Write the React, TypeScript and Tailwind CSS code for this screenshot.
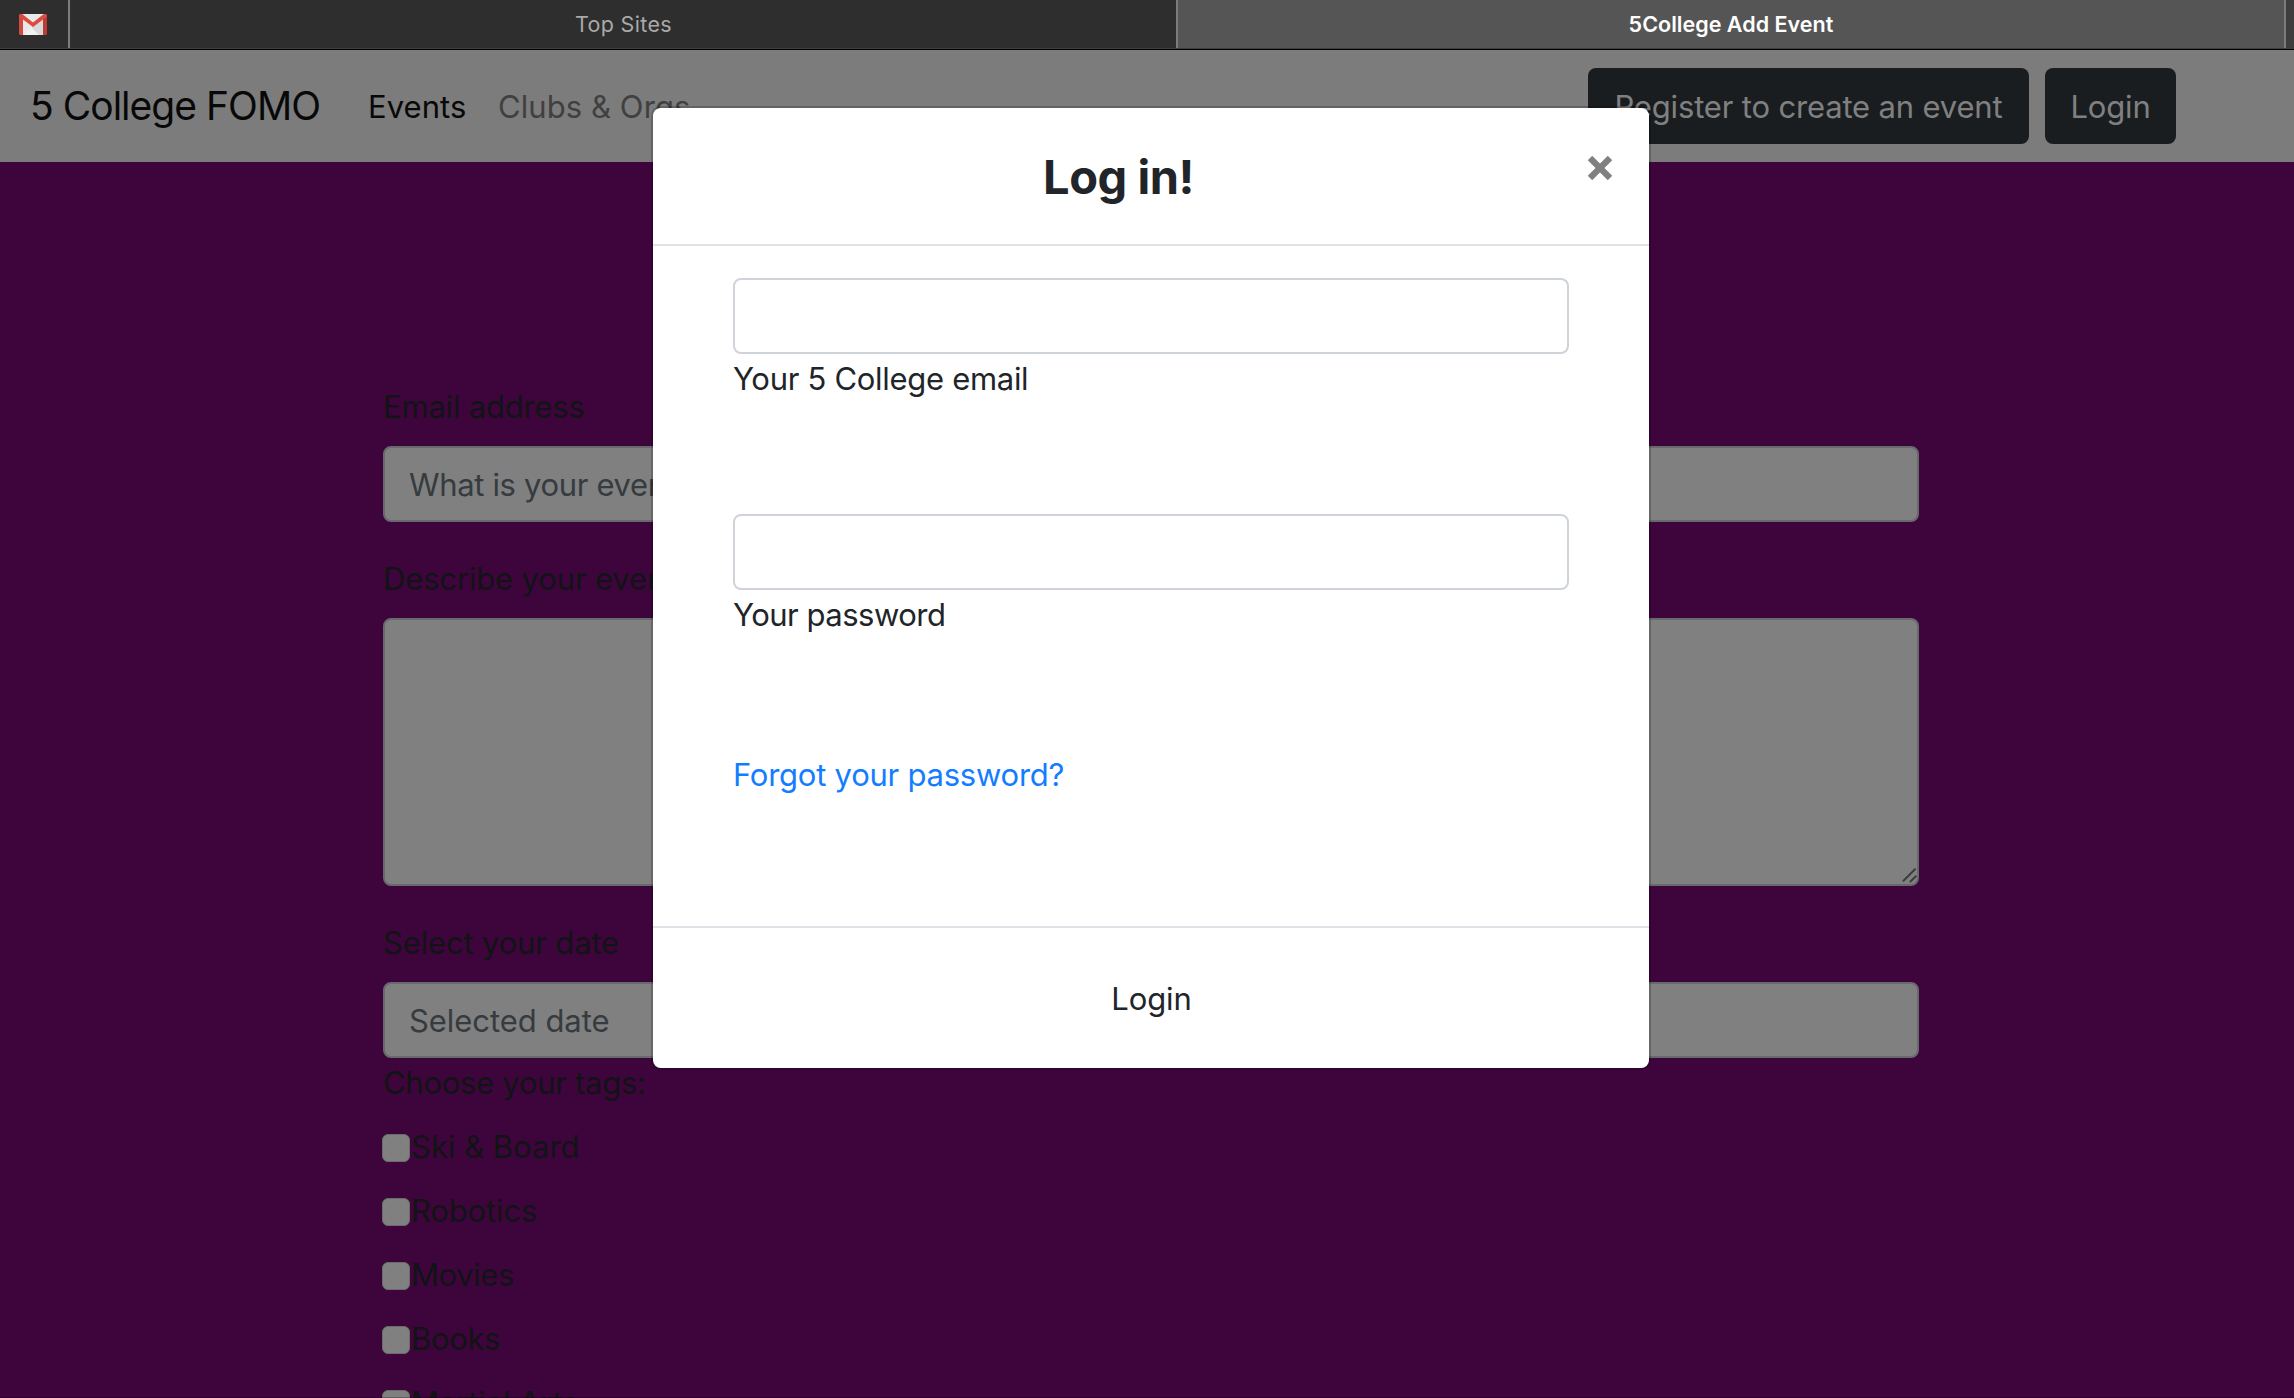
import React from "react";

const TAGS = [
  { name: "Ski & Board", tracking: "tracking-[0px]" },
  { name: "Robotics", tracking: "tracking-[-0.15px]" },
  { name: "Movies", tracking: "tracking-[-0.42px]" },
  { name: "Books", tracking: "tracking-[-0.36px]" },
  { name: "Martial Arts", tracking: "tracking-[-0.1px]" },
];

function GmailIcon() {
  return (
    <svg width="28" height="21" viewBox="0 0 28 21" className="block">
      <rect x="1" y="0" width="26" height="21" rx="1.5" fill="#e9e9e9" />
      <path d="M4 21 L14 11.5 L24 21 Z" fill="#f1f1f1" />
      <path d="M14 12.5 L24 3.5 V21 H20 L12.5 13.5 Z" fill="#d9d9d9" />
      <path d="M0 2 Q0 0 2 0 L4 1.5 V21 H1.5 Q0 21 0 19.5 Z" fill="#d54a40" />
      <path d="M28 2 Q28 0 26 0 L24 1.5 V21 H26.5 Q28 21 28 19.5 Z" fill="#c13a33" />
      <path d="M0 2 Q0 0 2 0 H3.2 L14 8.6 L24.8 0 H26 Q28 0 28 2 V2.6 L14 13 L0 2.6 Z" fill="#dc4b40" />
    </svg>
  );
}

function TabBar() {
  return (
    <div className="flex h-[50px] border-b border-black bg-[#3e3e3e] pb-px text-[21.5px] leading-[48px]">
      <div className="flex w-[70px] items-center border-r-2 border-[#7c7c7c] bg-[#2e2e2e] pl-[19px] pt-px">
        <GmailIcon />
      </div>
      <div className="w-[1108px] border-r-2 border-[#7c7c7c] bg-[#2e2e2e] pl-px text-center tracking-[0.34px] text-[#a9a9a9]">
        Top Sites
      </div>
      <div className="w-[1108px] border-r-2 border-[#7c7c7c] bg-[#555555] text-center font-semibold tracking-[0.03px] text-white">
        5College Add Event
      </div>
    </div>
  );
}

function NavBar() {
  return (
    <nav className="flex h-28 items-center bg-[#7c7c7c] pl-[29px] pr-[118px]">
      <span className="w-[339px] pl-px text-[39px] leading-[60px] tracking-[-0.98px] text-[#080808]">
        5 College FOMO
      </span>
      <span className="w-[130px] pt-0.5 leading-[50px] tracking-[0.06px] text-[#080808]">Events</span>
      <span className="pt-0.5 leading-[50px] tracking-[0.08px] text-[#404040]">Clubs &amp; Orgs</span>
      <div className="ml-auto flex gap-4">
        <button className="h-[76px] w-[441px] rounded-lg bg-[#1a1d20] pt-0.5 leading-[50px] tracking-[-0.165px] text-[#808080]">
          Register to create an event
        </button>
        <button className="h-[76px] w-[131px] rounded-lg bg-[#1a1d20] pt-0.5 leading-[50px] tracking-[-0.16px] text-[#808080]">
          Login
        </button>
      </div>
    </nav>
  );
}

function EventForm() {
  return (
    <main className="px-[383px] pr-[375px] pt-[220px] text-[#111315]">
      <div className="mb-4 h-12 leading-[50px] tracking-[-0.2px]">Email address</div>
      <div className="h-[76px] rounded-lg border-2 border-[#676a6d] bg-[#808080] px-6 py-3 leading-[50px] tracking-[-0.34px] text-[#363b3f]">
        What is your event name?
      </div>
      <div className="mb-4 mt-8 h-12 leading-[50px] tracking-[-0.15px]">Describe your event</div>
      <div className="flex h-[268px] items-end justify-end rounded-lg border-2 border-[#676a6d] bg-[#808080]">
        <svg width="16" height="18" viewBox="0 0 16 18" className="block" stroke="#3c3c3c" strokeWidth="2" strokeLinecap="round">
          <path d="M2.5 14.8 L14 3.2 M9.5 15.5 L14.8 10.2" />
        </svg>
      </div>
      <div className="mb-4 mt-8 h-12 leading-[50px] tracking-[-0.16px]">Select your date</div>
      <div className="h-[76px] rounded-lg border-2 border-[#676a6d] bg-[#808080] px-6 py-3 leading-[50px] tracking-[-0.05px] text-[#363b3f]">
        Selected date
      </div>
      <div className="mb-4 h-12 leading-[50px] tracking-[-0.28px]">Choose your tags:</div>
      {TAGS.map((tag) => (
        <div key={tag.name} className="-ml-px mb-4 flex h-12 items-start">
          <span className="mr-px mt-3 size-7 rounded-md border border-[#6c6c6c] bg-[#808080]" />
          <span className={"whitespace-nowrap leading-[50px] " + tag.tracking}>{tag.name}</span>
        </div>
      ))}
    </main>
  );
}

function LoginModal() {
  return (
    <div
      role="dialog"
      className="absolute left-[651px] top-[106px] flex h-[964px] w-[1000px] flex-col rounded-[9.6px] border-2 border-black/20 bg-white bg-clip-padding text-[#212529]"
    >
      <div className="flex h-[138px] items-start justify-between border-b-2 border-[#dee2e6] pl-[390px] pr-[37px] pt-[33px]">
        <h4 className="text-[47px] font-bold leading-[72px] tracking-[-0.45px]">Log in!</h4>
        <button aria-label="Close" className="mt-[15px]">
          <svg width="24" height="24" viewBox="0 0 24 24" className="block" stroke="#808080" strokeWidth="6.2">
            <path d="M2 2 L22 22 M22 2 L2 22" />
          </svg>
        </button>
      </div>
      <div className="flex-1 px-20 pt-8">
        <div className="h-[76px] rounded-lg border-2 border-[#ced4da]" />
        <div className="h-12 leading-[50px] tracking-[-0.3px]">Your 5 College email</div>
        <div className="mt-28 h-[76px] rounded-lg border-2 border-[#ced4da]" />
        <div className="h-12 leading-[50px] tracking-[-0.5px]">Your password</div>
        <a className="mt-28 block h-12 leading-[50px] tracking-[-0.24px] text-[#147dff]">
          Forgot your password?
        </a>
      </div>
      <div className="flex h-[142px] items-center justify-center border-t-2 border-[#dee2e6]">
        <button className="h-[76px] pl-px pt-0.5 leading-[50px] tracking-[-0.06px]">Login</button>
      </div>
    </div>
  );
}

export default function App() {
  return (
    <div className="relative h-[1398px] w-[2294px] overflow-hidden bg-[#3e053d] font-['Inter',sans-serif] text-[31px]">
      <TabBar />
      <NavBar />
      <EventForm />
      <LoginModal />
      <div className="absolute inset-x-0 bottom-0 h-px bg-black/25" />
    </div>
  );
}
